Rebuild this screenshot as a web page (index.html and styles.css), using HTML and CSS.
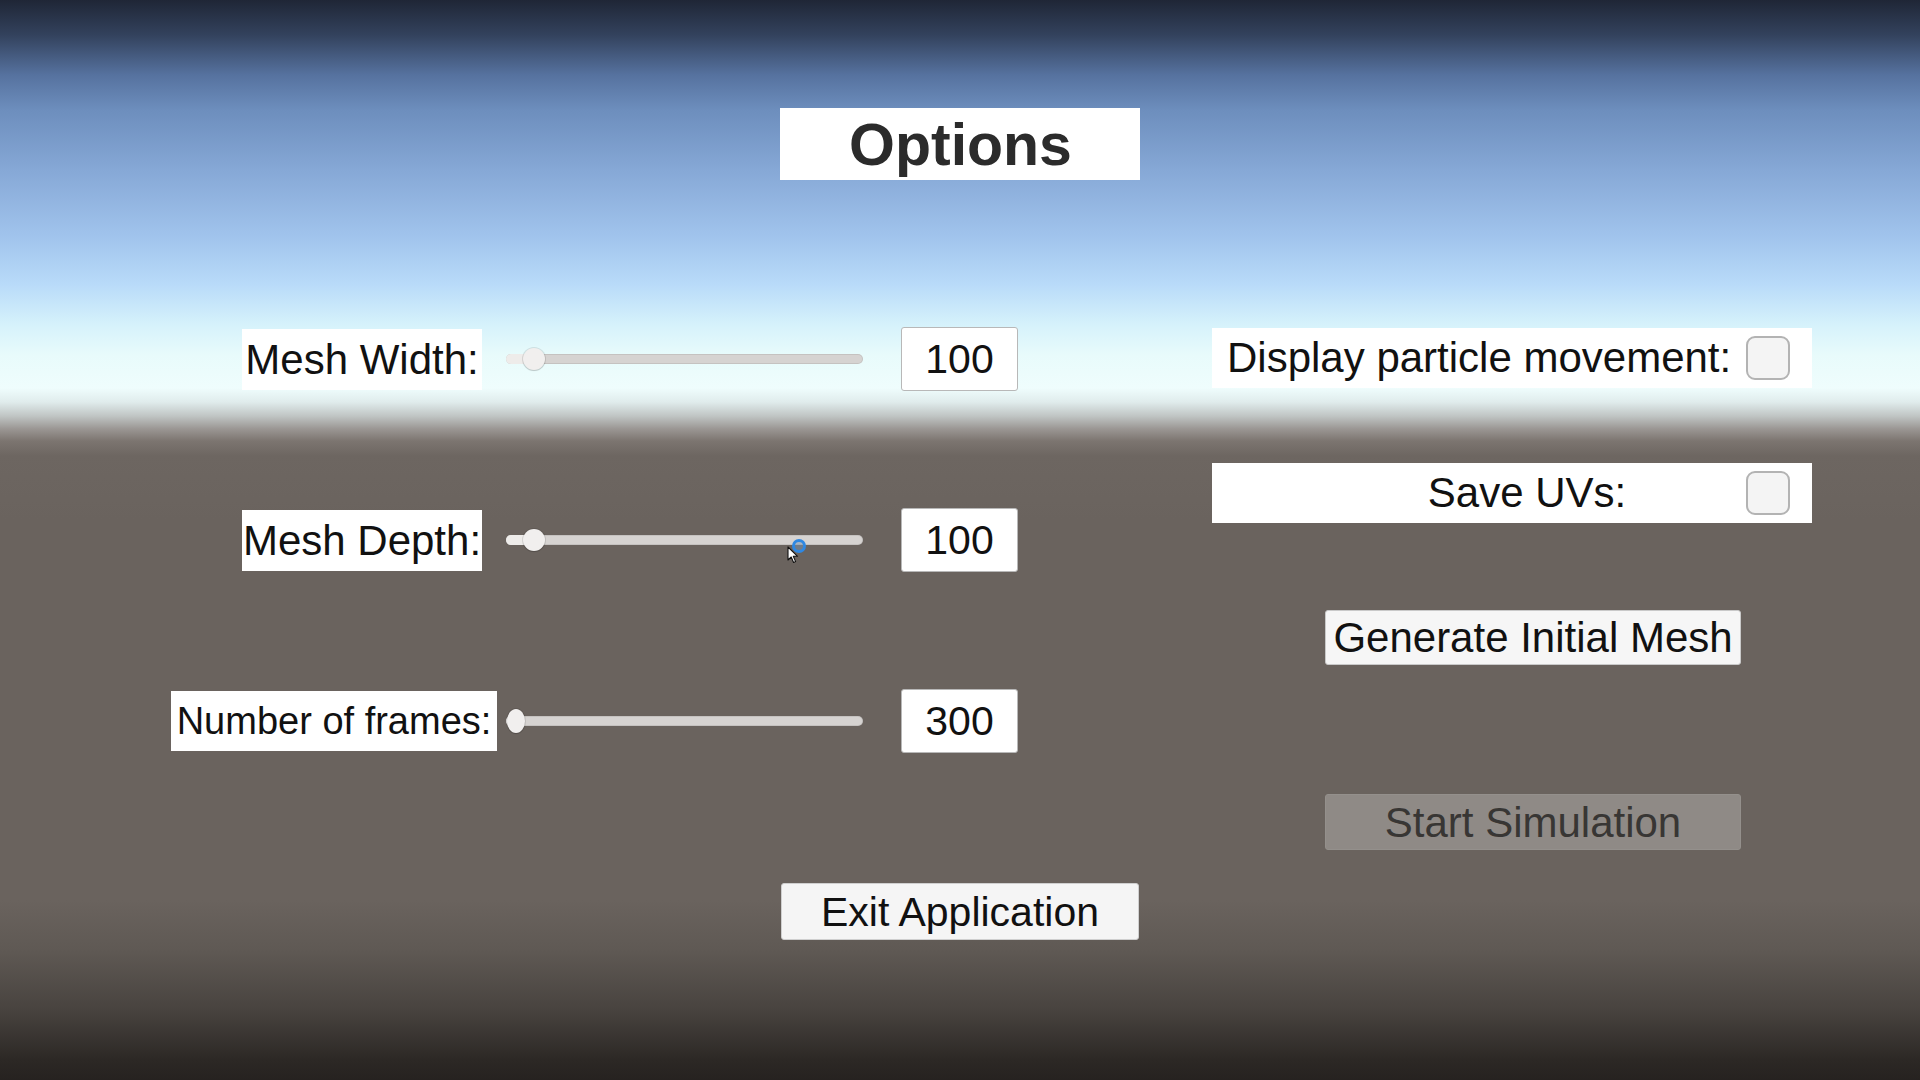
FILE: index.html
```html
<!DOCTYPE html>
<html lang="en">
<head>
<meta charset="utf-8">
<title>Options</title>
<link rel="stylesheet" href="styles.css">
</head>
<body>
<div class="screen">
  <header class="title-row">
    <h1 class="title">Options</h1>
  </header>

  <div class="panels">
    <section class="left">
      <div class="row">
        <div class="label-cell"><span class="label">Mesh Width:</span></div>
        <div class="slider">
          <div class="track"><div class="fill" style="width:27px"></div></div>
          <div class="thumb" style="left:17px"></div>
        </div>
        <div class="value">100</div>
      </div>

      <div class="row">
        <div class="label-cell"><span class="label">Mesh Depth:</span></div>
        <div class="slider">
          <div class="track"><div class="fill" style="width:27px"></div></div>
          <div class="thumb" style="left:17px"></div>
        </div>
        <div class="value">100</div>
      </div>

      <div class="row">
        <div class="label-cell label-cell--wide"><span class="label label--small">Number of frames:</span></div>
        <div class="slider">
          <div class="track"><div class="fill" style="width:10px"></div></div>
          <div class="thumb thumb--oval" style="left:1px"></div>
        </div>
        <div class="value">300</div>
      </div>
    </section>

    <section class="right">
      <div class="toggle toggle--first">
        <span class="toggle-text">Display particle movement:</span>
        <span class="checkbox"></span>
      </div>
      <div class="toggle toggle--second">
        <span class="toggle-text toggle-text--center">Save UVs:</span>
        <span class="checkbox"></span>
      </div>
      <button class="btn btn--generate">Generate Initial Mesh</button>
      <button class="btn btn--disabled">Start Simulation</button>
    </section>
  </div>

  <div class="exit-row">
    <button class="btn btn--exit">Exit Application</button>
  </div>

  <span class="click-ring"></span>
  <svg class="cursor" width="12" height="18" viewBox="0 0 12 18">
    <path d="M1 1 L1 14 L4.2 11 L6.6 16.5 L8.6 15.6 L6.3 10.3 L10.6 10.3 Z" fill="#ffffff" stroke="#111111" stroke-width="1.1" stroke-linejoin="round"/>
  </svg>
</div>
</body>
</html>
```

FILE: styles.css
```css
* {
  box-sizing: border-box;
}

html, body {
  margin: 0;
  padding: 0;
}

body {
  width: 1920px;
  height: 1080px;
  overflow: hidden;
  font-family: "Liberation Sans", Arial, sans-serif;
  color: #141414;
}

.screen {
  position: relative;
  width: 1920px;
  height: 1080px;
  padding-top: 108px;
  background: linear-gradient(to bottom,
    #1f2636 0px,
    #33425d 35px,
    #56729f 75px,
    #6d8ebd 110px,
    #86a8d6 170px,
    #a0c3ec 235px,
    #b9dbf9 285px,
    #d6f2fb 325px,
    #e8fbfb 355px,
    #effdfd 388px,
    #e0ecec 402px,
    #c0c5c4 416px,
    #9a9693 429px,
    #7c7570 441px,
    #6d6661 456px,
    #6a635e 520px,
    #6a635e 900px,
    #5f5954 950px,
    #48433f 1010px,
    #2c2825 1060px,
    #262220 1080px);
}

/* Title */
.title-row {
  display: flex;
  justify-content: center;
}

.title {
  margin: 0;
  width: 360px;
  height: 72px;
  background: #ffffff;
  font-size: 59px;
  font-weight: bold;
  line-height: 74px;
  text-align: center;
  color: #2b2b2b;
  padding-left: 1px;
}

/* Panels */
.panels {
  display: flex;
  margin-top: 147px;
}

.left {
  margin-left: 171px;
  width: 847px;
  display: flex;
  flex-direction: column;
  gap: 117px;
}

.row {
  display: flex;
  align-items: center;
  height: 64px;
}

.label-cell {
  width: 335px;
  display: flex;
  justify-content: flex-end;
  padding-right: 24px;
}

.label-cell--wide {
  padding-right: 9px;
}

.label {
  display: block;
  width: 240px;
  height: 61px;
  background: #ffffff;
  font-size: 42px;
  line-height: 62px;
  text-align: center;
  white-space: nowrap;
  color: #111111;
}

.label--small {
  width: 326px;
  font-size: 38px;
  height: 60px;
  line-height: 61px;
}

/* Slider */
.slider {
  position: relative;
  width: 357px;
  height: 28px;
  display: flex;
  align-items: center;
}

.track {
  width: 100%;
  height: 10px;
  border-radius: 5px;
  background: #d6d3d1;
  box-shadow: inset 0 0 0 1px rgba(0, 0, 0, 0.08);
  overflow: hidden;
}

.fill {
  height: 100%;
  background: #eeecea;
}

.thumb {
  position: absolute;
  top: 3px;
  width: 22px;
  height: 22px;
  border-radius: 50%;
  background: #f1efee;
  box-shadow: 0 0 0 1px rgba(0, 0, 0, 0.10), 0 1px 1px rgba(0, 0, 0, 0.12);
}

.thumb--oval {
  top: 2px;
  width: 18px;
  height: 24px;
}

.value {
  margin-left: 38px;
  width: 117px;
  height: 64px;
  background: #ffffff;
  border: 1px solid #b8b8b8;
  border-radius: 3px;
  font-size: 41px;
  line-height: 62px;
  text-align: center;
  color: #111111;
}

/* Right column */
.right {
  margin-left: 194px;
  width: 600px;
  display: flex;
  flex-direction: column;
  padding-top: 1px;
}

.toggle {
  display: flex;
  align-items: center;
  width: 600px;
  height: 60px;
  background: #ffffff;
}

.toggle--second {
  margin-top: 75px;
}

.toggle-text {
  flex: 1;
  padding-left: 15px;
  font-size: 42px;
  line-height: 60px;
  white-space: nowrap;
  color: #111111;
}

.toggle-text--center {
  text-align: center;
  padding-left: 96px;
}

.checkbox {
  flex: none;
  width: 44px;
  height: 44px;
  margin-right: 22px;
  border: 2px solid #b3b3b3;
  border-radius: 9px;
  background: #f4f4f4;
}

/* Buttons */
.btn {
  display: block;
  margin: 0;
  padding: 0;
  font-family: "Liberation Sans", Arial, sans-serif;
  font-size: 42px;
  text-align: center;
  white-space: nowrap;
  border-radius: 3px;
  color: #111111;
}

.btn--generate {
  margin-top: 87px;
  margin-left: 113px;
  width: 416px;
  height: 55px;
  line-height: 54px;
  background: #f6f6f6;
  border: 1px solid #c9c9c9;
}

.btn--disabled {
  margin-top: 129px;
  margin-left: 113px;
  width: 416px;
  height: 56px;
  line-height: 55px;
  background: #8f8a86;
  border: 1px solid #94908c;
  color: #383634;
}

.exit-row {
  display: flex;
  justify-content: center;
  margin-top: 33px;
}

.btn--exit {
  width: 358px;
  height: 57px;
  line-height: 56px;
  background: #f5f5f5;
  border: 1px solid #cfcfcf;
  font-size: 41px;
}

/* Pointer overlay */
.click-ring {
  position: absolute;
  left: 792px;
  top: 539px;
  width: 14px;
  height: 14px;
  border-radius: 50%;
  border: 3px solid #2f88e2;
  background: rgba(120, 150, 180, 0.5);
}

.cursor {
  position: absolute;
  left: 787px;
  top: 546px;
}
```
